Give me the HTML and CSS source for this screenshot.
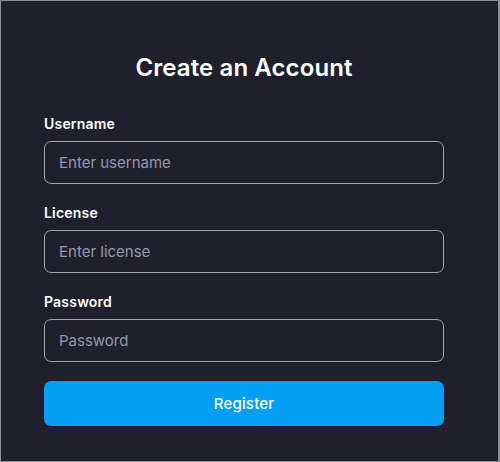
FILE: index.html
```html
<!DOCTYPE html>
<html>
<head>
<meta charset="utf-8">
<link rel="stylesheet" href="styles.css">
</head>
<body>
<div class="frame">
  <form class="card">
    <h1 class="title">Create an Account</h1>
    <div class="field">
      <label class="label">Username</label>
      <input class="input" type="text" placeholder="Enter username">
    </div>
    <div class="field">
      <label class="label">License</label>
      <input class="input" type="text" placeholder="Enter license">
    </div>
    <div class="field">
      <label class="label">Password</label>
      <input class="input" type="password" placeholder="Password">
    </div>
    <button class="btn" type="button">Register</button>
  </form>
</div>
</body>
</html>
```
FILE: styles.css
```css
html, body {
  margin: 0;
  padding: 0;
}
body {
  width: 500px;
  height: 462px;
  font-family: "Inter", "Noto Sans", sans-serif;
}
.frame {
  box-sizing: border-box;
  width: 500px;
  height: 462px;
  border: 1px solid #8e8e98;
  border-right-width: 2px;
  background: #1f1f2e;
  padding: 0 55px 0 43px;
}
.card {
  display: flex;
  flex-direction: column;
  width: 400px;
  margin: 0;
}
.title {
  margin: 51px 0 0;
  height: 32px;
  line-height: 32px;
  text-align: center;
  color: #ffffff;
  font-size: 24px;
  font-weight: 600;
  letter-spacing: 0.1px;
}
.field {
  display: flex;
  flex-direction: column;
  margin-top: 30px;
}
.field + .field {
  margin-top: 19px;
}
.label {
  color: #ffffff;
  font-size: 14px;
  font-weight: 600;
  line-height: 20px;
  height: 20px;
  letter-spacing: 0.2px;
}
.input {
  box-sizing: border-box;
  margin-top: 7px;
  width: 400px;
  height: 43px;
  border: 1px solid #a3a3b2;
  border-radius: 7px;
  background: transparent;
  padding: 0 14px;
  font-family: inherit;
  font-size: 15px;
  color: #ffffff;
  outline: none;
}
.input::placeholder {
  color: #9797ab;
}
.btn {
  box-sizing: border-box;
  margin-top: 19px;
  width: 400px;
  height: 45px;
  border: none;
  border-radius: 7px;
  background: #039ff5;
  color: #ffffff;
  font-family: inherit;
  font-size: 15px;
  font-weight: 500;
  letter-spacing: 0.2px;
  cursor: pointer;
}
```
